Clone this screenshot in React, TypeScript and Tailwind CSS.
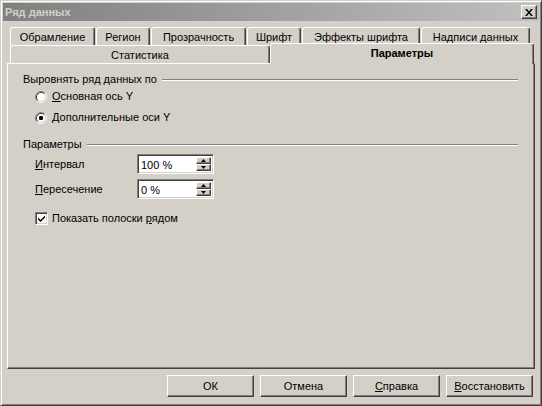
import type { ReactNode } from 'react';

const raised =
  'border border-t-white border-l-white border-r-[#404040] border-b-[#404040] shadow-[inset_-1px_-1px_#808080]';
const sunken =
  'border border-t-[#808080] border-l-[#808080] border-r-white border-b-white shadow-[inset_1px_1px_#404040,inset_-1px_-1px_#d4d0c8]';

const backTabs = [
  { label: 'Обрамление', w: 'w-[85px]' },
  { label: 'Регион', w: 'w-[54px]' },
  { label: 'Прозрачность', w: 'w-[95px]' },
  { label: 'Шрифт', w: 'w-[54px]' },
  { label: 'Эффекты шрифта', w: 'w-[118px]' },
  { label: 'Надписи данных', w: 'w-[109px]' },
];

function CloseButton() {
  return (
    <div className={`flex h-[14px] w-[16px] items-center justify-center bg-[#d4d0c8] ${raised}`}>
      <svg width="8" height="7" viewBox="0 0 8 7">
        <path d="M0 0h2l2 2.5L6 0h2L5 3.5 8 7H6L4 4.5 2 7H0l3-3.5z" fill="#000" />
      </svg>
    </div>
  );
}

function Radio({ checked }: { checked?: boolean }) {
  return (
    <svg width="12" height="12" viewBox="0 0 12 12" className="shrink-0">
      <circle cx="6" cy="6" r="4.5" fill="#fff" />
      <path d="M2.11 9.89A5.5 5.5 0 0 1 9.89 2.11" stroke="#808080" fill="none" />
      <path d="M9.89 2.11A5.5 5.5 0 0 1 2.11 9.89" stroke="#fff" fill="none" />
      <path d="M2.82 9.18A4.5 4.5 0 0 1 9.18 2.82" stroke="#404040" fill="none" />
      <path d="M9.18 2.82A4.5 4.5 0 0 1 2.82 9.18" stroke="#d4d0c8" fill="none" />
      {checked && <rect x="4" y="4" width="4" height="4" rx="1.2" fill="#000" />}
    </svg>
  );
}

function GroupHeader({ children, top }: { children: ReactNode; top: string }) {
  return (
    <div className={`flex h-[14px] items-center ${top}`}>
      <span className="whitespace-nowrap">{children}</span>
      <div className="ml-[5px] mt-[2px] h-[2px] flex-1 border-t border-b border-t-[#808080] border-b-white" />
    </div>
  );
}

function SpinArrow({ up }: { up?: boolean }) {
  return (
    <div className={`flex flex-1 items-center justify-center bg-[#d4d0c8] ${raised}`}>
      <svg width="5" height="3" viewBox="0 0 5 3">
        <path d={up ? 'M2.5 0L5 3H0z' : 'M0 0h5L2.5 3z'} fill="#000" />
      </svg>
    </div>
  );
}

function SpinField({ value }: { value: string }) {
  return (
    <div className={`flex h-[20px] w-[77px] bg-white p-[2px] ${sunken}`}>
      <span className="flex-1 pl-[1px] leading-[16px]">{value}</span>
      <div className="flex w-[15px] flex-col">
        <SpinArrow up />
        <SpinArrow />
      </div>
    </div>
  );
}

function DialogButton({ children }: { children: ReactNode }) {
  return (
    <div className={`flex h-[22px] w-[87px] items-center justify-center ${raised}`}>
      {children}
    </div>
  );
}

export default function App() {
  return (
    <div
      className="h-[406px] w-[542px] overflow-hidden border border-t-[#d4d0c8] border-l-[#d4d0c8] border-r-[#404040] border-b-[#404040] bg-[#d4d0c8] p-[2px] text-[11px] leading-none text-black shadow-[inset_1px_1px_#fff,inset_-1px_-1px_#808080]"
      style={{ fontFamily: '"Liberation Sans", Arial, sans-serif' }}
    >
      {/* title bar */}
      <div className="flex h-[18px] items-center justify-between bg-gradient-to-r from-[#808080] to-[#c0c0c0] pl-[2px] pr-[2px]">
        <span className="text-[11px] font-bold text-[#d4d0c8]">Ряд данных</span>
        <CloseButton />
      </div>

      {/* tabs, back row */}
      <div className="mt-[6px] flex h-[18px] pl-[7px]">
        {backTabs.map((tab) => (
          <div
            key={tab.label}
            className={`${tab.w} mr-[1px] flex items-center justify-center rounded-t-[3px] border-t border-l border-r border-t-white border-l-white border-r-[#404040] pt-[1px] shadow-[inset_-1px_0_#808080]`}
          >
            {tab.label}
          </div>
        ))}
      </div>

      {/* tabs, front row */}
      <div className="flex h-[18px] items-end pl-[7px]">
        <div className="flex h-[18px] w-[260px] items-center justify-center rounded-t-[3px] border-t border-l border-r border-t-white border-l-white border-r-[#404040] pt-[2px] shadow-[inset_-1px_0_#808080]">
          Статистика
        </div>
        <div className="relative top-[1px] z-10 flex h-[21px] w-[264px] items-center justify-center rounded-t-[3px] border-t border-l border-r border-t-white border-l-white border-r-[#404040] bg-[#d4d0c8] pb-[1px] font-bold shadow-[inset_-1px_0_#808080]">
          Параметры
        </div>
      </div>

      {/* page */}
      <div className={`mx-[4px] flex h-[306px] flex-col pl-[15px] pr-[16px] ${raised}`}>
        <GroupHeader top="mt-[8px]">Выровнять ряд данных по</GroupHeader>
        <div className="ml-[12px] flex h-[21px] items-center gap-[5px]">
          <Radio />
          <span>
            <u>О</u>сновная ось Y
          </span>
        </div>
        <div className="ml-[12px] flex h-[21px] items-center gap-[5px]">
          <Radio checked />
          <span>
            <u>Д</u>ополнительные оси Y
          </span>
        </div>

        <GroupHeader top="mt-[9px]">Параметры</GroupHeader>
        <div className="ml-[12px] mt-[3px] flex h-[20px] items-center">
          <span className="w-[102px]">
            <u>И</u>нтервал
          </span>
          <SpinField value="100 %" />
        </div>
        <div className="ml-[12px] mt-[5px] flex h-[20px] items-center">
          <span className="w-[102px]">
            <u>П</u>ересечение
          </span>
          <SpinField value="0 %" />
        </div>
        <div className="ml-[12px] mt-[12px] flex h-[14px] items-center gap-[4px]">
          <div className={`flex h-[13px] w-[13px] items-center justify-center bg-white ${sunken}`}>
            <svg width="7" height="7" viewBox="0 0 7 7">
              <path d="M0 2.5l2.5 2.5L7 0.5V2.5L2.5 7 0 4.5z" fill="#000" />
            </svg>
          </div>
          <span>
            Показать полоски <u>р</u>ядом
          </span>
        </div>
      </div>

      {/* dialog buttons */}
      <div className="mt-[6px] flex justify-end gap-[6px] pr-[6px]">
        <DialogButton>ОК</DialogButton>
        <DialogButton>Отмена</DialogButton>
        <DialogButton>
          <span>
            <u>С</u>правка
          </span>
        </DialogButton>
        <DialogButton>
          <span>
            <u>В</u>осстановить
          </span>
        </DialogButton>
      </div>
    </div>
  );
}
